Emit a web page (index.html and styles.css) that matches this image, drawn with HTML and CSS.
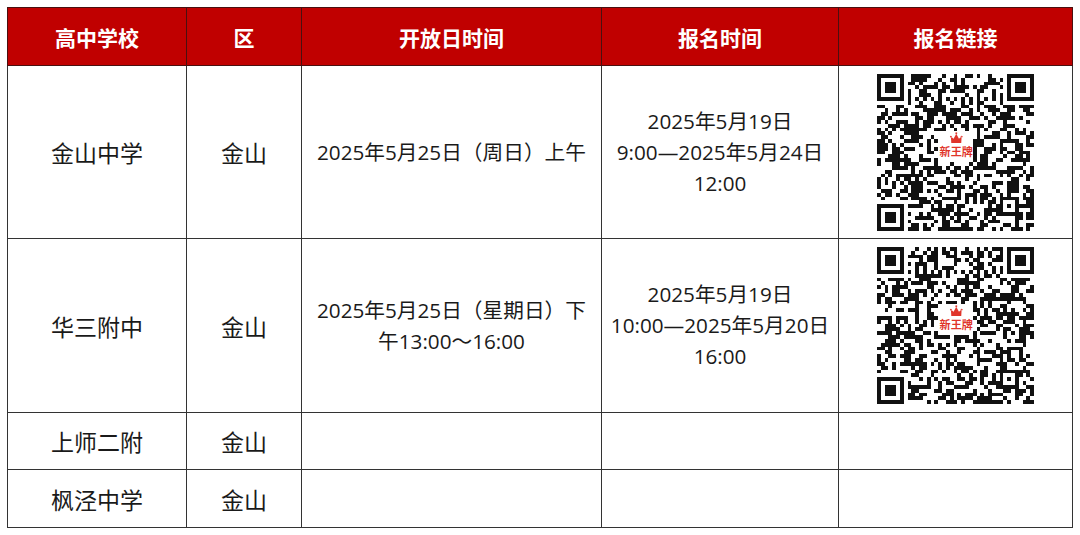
FILE: index.html
```html
<!DOCTYPE html>
<html lang="zh-CN">
<head>
<meta charset="utf-8">
<title>高中学校开放日</title>
<link rel="stylesheet" href="styles.css">
</head>
<body>
<table class="sched">
  <colgroup>
    <col class="c-school"><col class="c-district"><col class="c-open"><col class="c-reg"><col class="c-link">
  </colgroup>
  <thead>
    <tr class="head-row">
      <th>高中学校</th><th>区</th><th>开放日时间</th><th>报名时间</th><th>报名链接</th>
    </tr>
  </thead>
  <tbody>
    <tr class="row-tall">
      <td class="big">金山中学</td>
      <td class="big">金山</td>
      <td class="txt">2025年5月25日（周日）上午</td>
      <td class="txt">2025年5月19日<br>9:00—2025年5月24日<br>12:00</td>
      <td class="qr-cell"><svg class="qr" data-seed="7" viewBox="0 0 41 41" width="157" height="157"></svg></td>
    </tr>
    <tr class="row-tall2">
      <td class="big">华三附中</td>
      <td class="big">金山</td>
      <td class="txt">2025年5月25日（星期日）下<br>午13:00～16:00</td>
      <td class="txt">2025年5月19日<br>10:00—2025年5月20日<br>16:00</td>
      <td class="qr-cell"><svg class="qr" data-seed="91" viewBox="0 0 41 41" width="157" height="157"></svg></td>
    </tr>
    <tr class="row-short">
      <td class="big">上师二附</td>
      <td class="big">金山</td>
      <td></td><td></td><td></td>
    </tr>
    <tr class="row-short2">
      <td class="big">枫泾中学</td>
      <td class="big">金山</td>
      <td></td><td></td><td></td>
    </tr>
  </tbody>
</table>
<script src="qr.js"></script>
</body>
</html>
```
FILE: styles.css
```css
html, body {
  margin: 0;
  padding: 0;
  background: #ffffff;
}
body {
  padding: 7px 0 0 7px;
  font-family: "Open Sans", "Noto Sans CJK SC", sans-serif;
  color: #1a1a1a;
}
.sched {
  border-collapse: collapse;
  table-layout: fixed;
  width: 1065px;
}
.c-school { width: 179px; }
.c-district { width: 115px; }
.c-open { width: 300px; }
.c-reg { width: 237px; }
.c-link { width: 234px; }
.sched th, .sched td {
  border: 1px solid #333333;
  text-align: center;
  vertical-align: middle;
  padding: 0;
}
.head-row { height: 58px; }
.head-row th {
  background: #c00000;
  color: #ffffff;
  font-family: "Noto Sans CJK SC", sans-serif;
  font-weight: 700;
  font-size: 21px;
  border-color: #4a1010;
}
.row-tall { height: 173px; }
.row-tall2 { height: 174px; }
.row-short { height: 57px; }
.row-short2 { height: 58px; }
.big {
  font-family: "Noto Sans CJK SC", sans-serif;
  font-size: 23px;
}
.txt {
  font-size: 20.7px;
  line-height: 31px;
}
.qr-cell {
  line-height: 0;
}
.qr {
  display: inline-block;
  vertical-align: middle;
}
.qr-mod { fill: #111111; }
.qr-crown { fill: #e0352b; }
.qr-logo-text {
  fill: #e0352b;
  font-family: "Noto Sans CJK SC", sans-serif;
  font-weight: 700;
  font-size: 2.9px;
}
```
FILE: qr.js
```js
(function () {
  var NS = "http://www.w3.org/2000/svg";
  function rng(seed) {
    var s = seed >>> 0;
    return function () {
      s = (Math.imul(s, 1664525) + 1013904223) >>> 0;
      return s / 4294967296;
    };
  }
  function build(svg) {
    var N = 41;
    var r = rng(parseInt(svg.getAttribute("data-seed"), 10) * 2654435761);
    var g = [];
    var y, x;
    for (y = 0; y < N; y++) {
      g.push([]);
      for (x = 0; x < N; x++) g[y].push(r() < 0.5);
    }
    function finder(ox, oy) {
      for (var j = -1; j < 8; j++) {
        for (var i = -1; i < 8; i++) {
          var xx = ox + i, yy = oy + j;
          if (xx < 0 || yy < 0 || xx >= N || yy >= N) continue;
          var on = false;
          if (i >= 0 && i <= 6 && j >= 0 && j <= 6) {
            on = (i === 0 || i === 6 || j === 0 || j === 6) || (i >= 2 && i <= 4 && j >= 2 && j <= 4);
          }
          g[yy][xx] = on;
        }
      }
    }
    finder(0, 0); finder(N - 7, 0); finder(0, N - 7);
    for (var k = 8; k < N - 8; k++) { g[6][k] = k % 2 === 0; g[k][6] = k % 2 === 0; }
    for (var aj = -2; aj <= 2; aj++) {
      for (var ai = -2; ai <= 2; ai++) {
        var m = Math.max(Math.abs(ai), Math.abs(aj));
        g[34 + aj][34 + ai] = (m === 2 || m === 0);
      }
    }
    for (y = 15; y <= 22; y++) for (x = 16; x <= 24; x++) g[y][x] = false;
    var d = "";
    for (y = 0; y < N; y++) {
      x = 0;
      while (x < N) {
        if (g[y][x]) {
          var s = x;
          while (x < N && g[y][x]) x++;
          d += "M" + s + " " + y + "h" + (x - s) + "v1h-" + (x - s) + "z";
        } else x++;
      }
    }
    var p = document.createElementNS(NS, "path");
    p.setAttribute("d", d);
    p.setAttribute("class", "qr-mod");
    p.setAttribute("shape-rendering", "crispEdges");
    svg.appendChild(p);
    var crown = document.createElementNS(NS, "path");
    crown.setAttribute("class", "qr-crown");
    crown.setAttribute("d", "M19.4 18.0L19.3 16.3L20.0 16.9L20.7 15.6L21.4 16.9L22.1 16.3L22.0 18.0Z M19.3 16.1a0.25 0.25 0 1 0 0.01 0Z M20.7 15.2a0.25 0.25 0 1 0 0.01 0Z M22.1 16.1a0.25 0.25 0 1 0 0.01 0Z");
    svg.appendChild(crown);
    var t = document.createElementNS(NS, "text");
    t.setAttribute("class", "qr-logo-text");
    t.setAttribute("x", "20.7");
    t.setAttribute("y", "21.4");
    t.setAttribute("text-anchor", "middle");
    t.textContent = "新王牌";
    svg.appendChild(t);
  }
  var list = document.querySelectorAll("svg.qr");
  for (var i = 0; i < list.length; i++) build(list[i]);
})();
```
